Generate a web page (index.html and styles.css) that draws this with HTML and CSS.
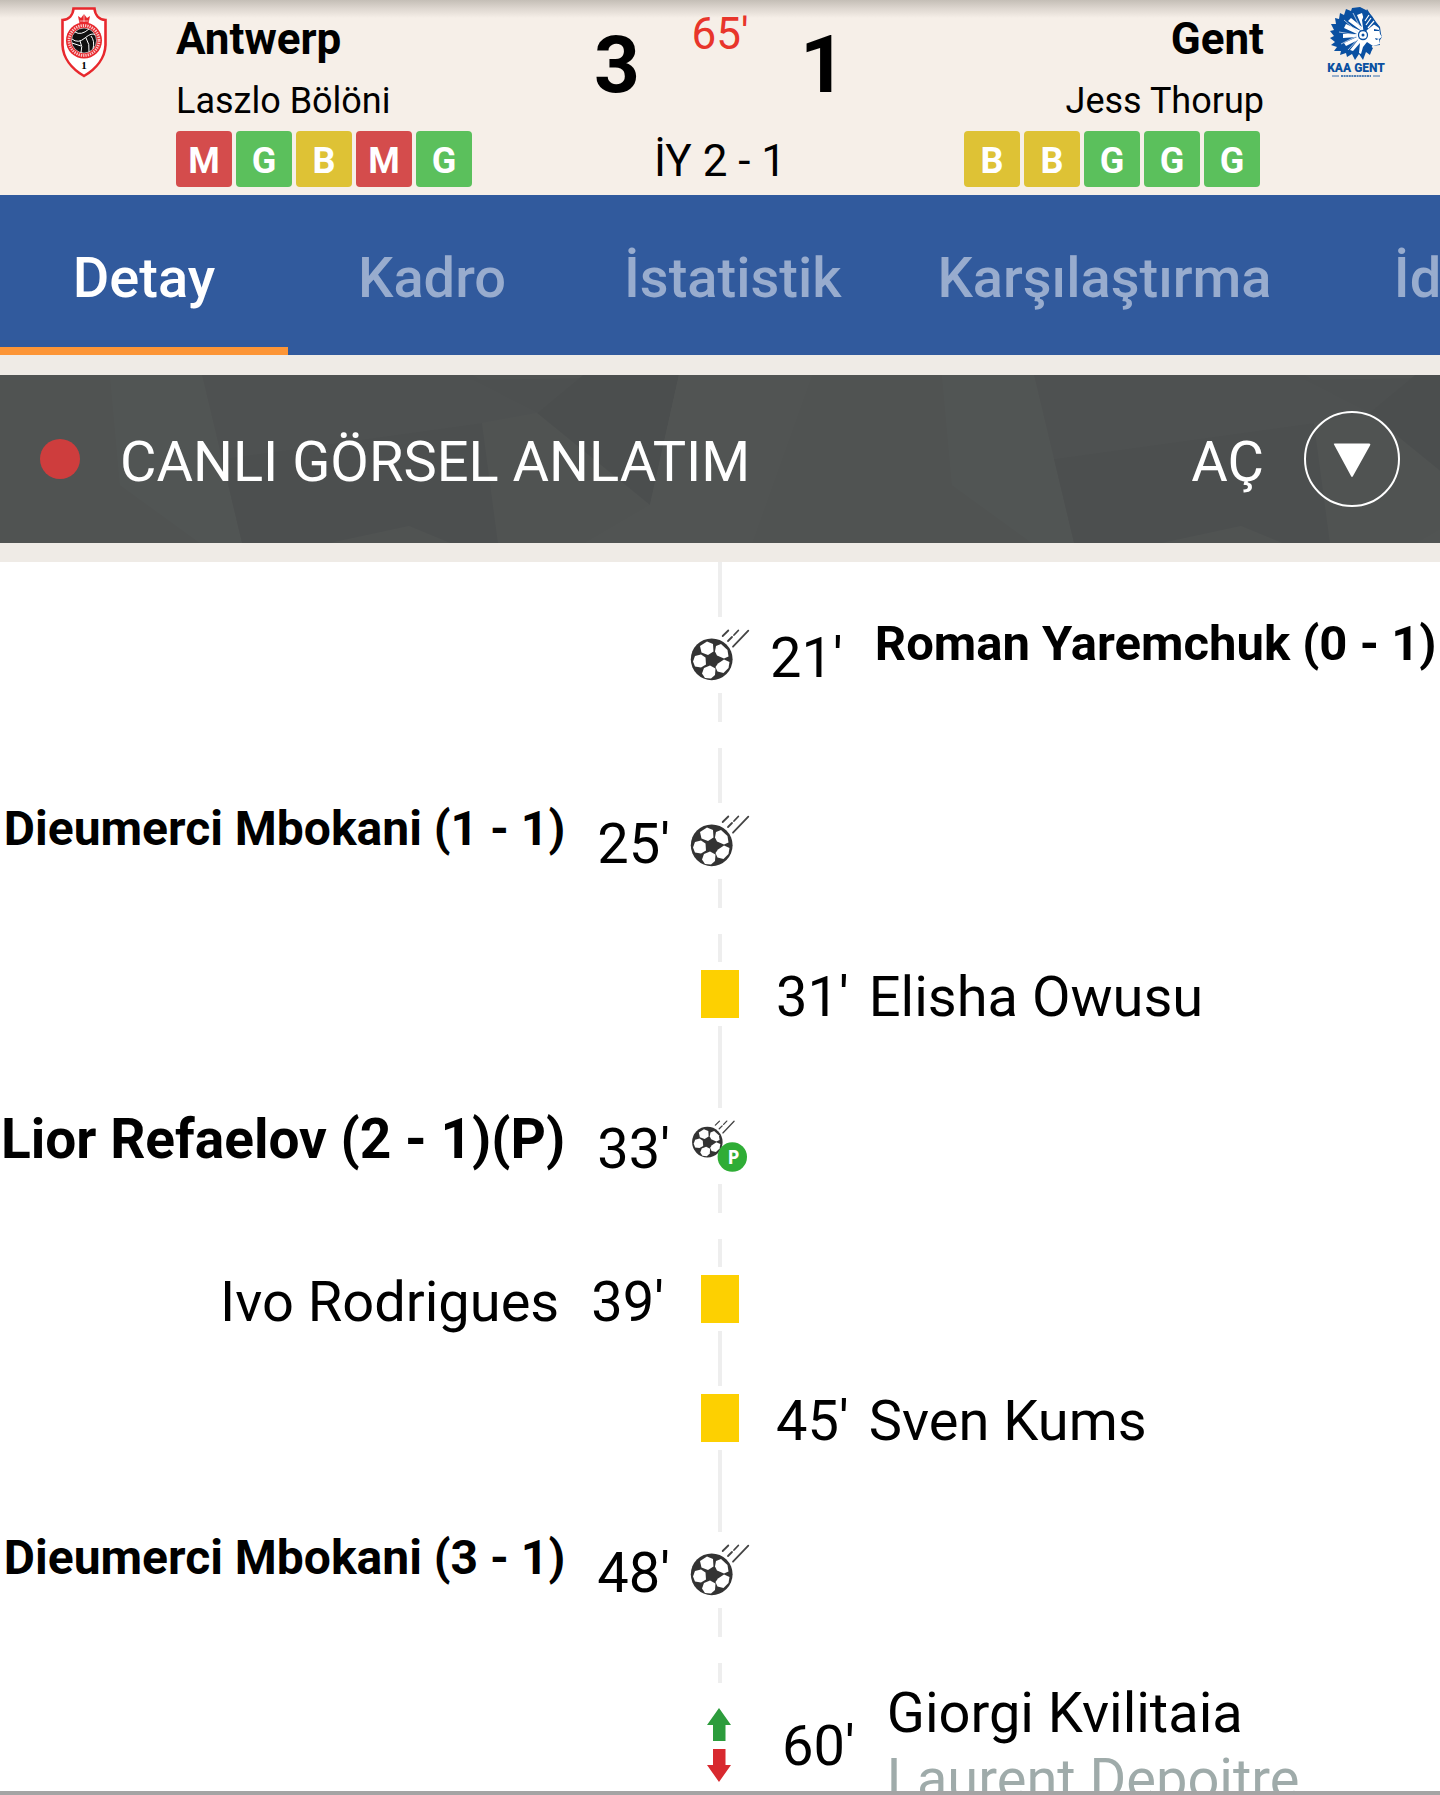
FILE: index.html
```html
<!doctype html>

<html lang="tr">
<head>
    <meta charset="utf-8">
    <meta name="viewport" content="width=device-width, initial-scale=1">

    <title>Antwerp 3 - 1 Gent</title>
    <link rel="stylesheet" href="styles.css">
</head>

<body>
    <!-- shared shapes -->
    <svg class="defs" aria-hidden="true">
        <defs>
            <g id="ball">
                <circle cx="21.7" cy="30.3" r="20.9" fill="#333"/>
                <g fill="#fff">
                    <path d="M10 17l7-4.500 6 2.500.5 7.500-5.500 3.500-6.500-2.500z"/>
                    <path d="M26 17l5-2 6.500 6 1 6.500-4.500 2-7-3-2-4z"/>
                    <path d="M28 34.500l6-4 5.500 2.500-1 6-5 5-6-1.500-2-4.500z"/>
                    <path d="M14 39l6-2.500 5.500 3-.5 6.500-4 3.500-6-.5-3-4.500z"/>
                    <path d="M5 27l6-1.500 4.500 3 .5 7-5 3-6-1-2-5z"/>
                </g>
                <path d="M32.700 7l5.600-5.500M38 12l4-4M44 6l4.300-4.500M43 17.700L58.300 1.700" stroke="#444" stroke-width="1.800" fill="none" stroke-linecap="round"/>
            </g>
            <pattern id="facets" width="832" height="168" patternUnits="userSpaceOnUse">
                <rect width="832" height="168" fill="#505352"/>
                <path d="M110 0H202L242 168H200L120 110Z" fill="#515554"/>
                <path d="M202 0H473L537 38L482 48L400 68L498 168H242Z" fill="#4e5151"/>
                <path d="M222 84L482 48L498 168H242Z" fill="#4c4f4f"/>
                <path d="M473 5L583 3L537 38Z" fill="#4d5050"/>
                <path d="M583 0H679L650 130L537 38Z" fill="#4b4e4e"/>
                <path d="M679 0H812L752 168H585L650 130Z" fill="#515453"/>
                <path d="M330 168L409 151L450 168Z" fill="#505352"/>
            </pattern>
        </defs>
    </svg>

    <header class="match">
        <svg class="logo" width="48" height="72" viewBox="0 0 48 72" role="img" aria-label="Antwerp">
            <path d="M13.500 2.500H34.500C35 9 39 13.500 45.500 14V39C45 52 36 63 24 70C12 63 3 52 2.500 39V14C9 13.500 13 9 13.500 2.500Z" fill="#fff" stroke="#e8282d" stroke-width="2.600"/>
            <path d="M18 10l3 2 3-4 3 4 3-2-1.500 7.500h-9z" fill="#e8282d"/>
            <path d="M19.500 15h9M24 8v8" stroke="#fff" stroke-width=".6"/>
            <circle cx="24" cy="34.500" r="18" fill="#e8282d"/>
            <circle cx="24" cy="34.500" r="15" fill="none" stroke="#fff" stroke-width="2.800" stroke-dasharray="1.300 1" opacity=".75"/>
            <circle cx="24" cy="34.500" r="12.500" fill="#111" stroke="#fff" stroke-width=".6"/>
            <path d="M12 33q6 5 13-1t10-3M15 26q6 4 14-3M20 35q3 5 1 12M26 32q4 6 3 14M31 30q4 5 2 13M12 37l9 3" stroke="#fff" stroke-width="1" fill="none"/>
            <text x="24" y="63" class="crest-no">1</text>
        </svg>

        <div class="team">
            <h2>Antwerp</h2>
            <p>Laszlo Bölöni</p>
            <div class="form">
                <span class="loss">M</span><span class="win">G</span><span class="draw">B</span><span class="loss">M</span><span class="win">G</span>
            </div>
        </div>

        <div class="score">
            <b>3</b>
            <div class="clock">
                <span class="minute-now">65'</span>
                <span>İY 2 - 1</span>
            </div>
            <b>1</b>
        </div>

        <div class="team away">
            <h2>Gent</h2>
            <p>Jess Thorup</p>
            <div class="form">
                <span class="draw">B</span><span class="draw">B</span><span class="win">G</span><span class="win">G</span><span class="win">G</span>
            </div>
        </div>

        <svg class="logo" width="60" height="72" viewBox="0 0 60 72" role="img" aria-label="KAA Gent">
            <path d="M26 2L34 1L40 4L46 10L50 16L54 21L55 28L56 31L54 34L54 39L46 40L44 49L40 46L37 54L33 48L29 54L26 48L21 51L20 47L14 49L15 45L8 45L11 41L5 39L9 36L4 32L8 30L4 25L8 24L5 18L10 18L9 12L13 13L14 7L18 9L20 3L25 5Z" fill="#0a50a1"/>
            <path d="M37 26L22 15L25 12L36 21L31 9L36 7L40 20L46 17L53 22L54 28L56 31L53 33L54 38L47 40L41 36L37 41L35 48L33 47L34 37L27 45L24 44L32 34L20 40L18 37L31 31L17 32L17 28L31 28L18 22L20 18Z" fill="#fff"/>
            <path d="M36 14L41 3L50 17L41 24L38 29ZM48 23l5 1v1l-5 0zM49 32l4 1-3 1zM42 39l5 3-3 6z" fill="#0a50a1"/>
            <path d="M39 15l4-6M40 19l5-7M42 22l6-7" stroke="#fff" stroke-width="1.200"/>
            <path d="M13 26l18 3M15 38l16-8M18 14l15 13M22 44l11-12M27 7l9 18" stroke="#d4e0ef" stroke-width=".8"/>
            <circle cx="37" cy="29" r="4.500" fill="#fff" stroke="#0a50a1" stroke-width="1.300"/>
            <circle cx="37" cy="29" r="1.500" fill="#0a50a1"/>
            <text x="30" y="66" class="club">KAA GENT</text>
            <path d="M6 70h7M47 70h7" stroke="#0a50a1" stroke-width=".8"/>
            <path d="M15 70h30" stroke="#0a50a1" stroke-width="2" stroke-dasharray="2 .6" opacity=".7"/>
        </svg>
    </header>

    <nav class="tabs">
        <a href="#detay" class="active">Detay</a>
        <a href="#kadro">Kadro</a>
        <a href="#istatistik">İstatistik</a>
        <a href="#karsilastirma">Karşılaştırma</a>
        <a href="#iddaa">İddaa</a>
    </nav>

    <section class="live">
        <svg class="live-bg" aria-hidden="true"><rect width="100%" height="100%" fill="url(#facets)"/></svg>
        <span class="dot"></span>
        <span class="live-title">CANLI GÖRSEL ANLATIM</span>
        <button type="button">
            <span>AÇ</span>
            <svg width="96" height="96" viewBox="0 0 96 96" aria-hidden="true">
                <circle cx="48" cy="48" r="47" fill="none" stroke="#fff" stroke-width="2"/>
                <path d="M30 33.500Q29 32.500 31 32.500H65Q67 32.500 66 34.500L49 65Q48 67 47 65Z" fill="#fff"/>
            </svg>
        </button>
    </section>

    <main class="timeline" id="detay">
        <div class="event goal">
            <div class="track"><i><svg width="60" height="52"><use href="#ball"/></svg></i></div>
            <div class="side right"><time>21'</time><span class="player long">Roman Yaremchuk (0 - 1)</span></div>
        </div>
        <div class="event goal">
            <div class="side left"><span class="player long">Dieumerci Mbokani (1 - 1)</span><time>25'</time></div>
            <div class="track"><i><svg width="60" height="52"><use href="#ball"/></svg></i></div>
        </div>
        <div class="event card">
            <div class="track"><i><span class="yellow"></span></i></div>
            <div class="side right"><time>31'</time><span class="player">Elisha Owusu</span></div>
        </div>
        <div class="event goal">
            <div class="side left"><span class="player">Lior Refaelov (2 - 1)(P)</span><time>33'</time></div>
            <div class="track"><i>
                <svg width="60" height="52">
                    <use href="#ball" transform="translate(1.5 0) scale(.73)"/>
                    <circle cx="42.300" cy="37" r="14.700" fill="#2fad36"/>
                    <text x="43.500" y="44" class="pen">P</text>
                </svg>
            </i></div>
        </div>
        <div class="event card">
            <div class="side left"><span class="player">Ivo Rodrigues</span><time>39'</time></div>
            <div class="track"><i><span class="yellow"></span></i></div>
        </div>
        <div class="event card">
            <div class="track"><i><span class="yellow"></span></i></div>
            <div class="side right"><time>45'</time><span class="player">Sven Kums</span></div>
        </div>
        <div class="event goal">
            <div class="side left"><span class="player long">Dieumerci Mbokani (3 - 1)</span><time>48'</time></div>
            <div class="track"><i><svg width="60" height="52"><use href="#ball"/></svg></i></div>
        </div>
        <div class="event sub">
            <div class="track"><i>
                <svg width="26" height="76" viewBox="0 0 26 76">
                    <path d="M12 1L24 18H18.500V34H6V18H0Z" fill="#2c9c3c"/>
                    <path d="M12 75L24 58H18.500V42H6V58H0Z" fill="#d8292f"/>
                </svg>
            </i></div>
            <div class="side right"><time>60'</time><span class="player">Giorgi Kvilitaia<br><span class="out">Laurent Depoitre</span></span></div>
        </div>
    </main>
</body>
</html>
```

FILE: styles.css
```css
* { box-sizing: border-box; }
body {
    display: flex;
    flex-direction: column;
    height: 100vh;
    margin: 0;
    overflow: hidden;
    background: #efebe6;
    color: #000;
    font-family: Roboto, Arial, sans-serif;
    font-size: 56px;
    line-height: 66px;
}
h2, p { margin: 0; }
a { text-decoration: none; }
svg { display: block; }
.defs { position: absolute; width: 0; height: 0; }

/* score header */
.match {
    display: grid;
    grid-template-columns: 176px 1fr auto 1fr 176px;
    flex: none;
    height: 195px;
    background: linear-gradient(#c4beb6, #dcd5ce 8px, #f6efe8 18px);
}
.logo { margin: 6px auto 0 60px; }
.away + .logo { margin: 6px 54px 0 auto; }
.crest-no { font: bold 11px "Liberation Serif", serif; text-anchor: middle; }
.club { font: 900 12px Roboto, sans-serif; fill: #0a50a1; text-anchor: middle; }
.team { padding-top: 14px; }
.team h2 { font-size: 44px; line-height: 50px; }
.team p { margin: 16px 0 9px; font-size: 36px; line-height: 42px; }
.form { display: flex; gap: 4px; }
.form span {
    width: 56px; height: 56px;
    border-radius: 4px;
    color: #fff;
    font-size: 36px;
    font-weight: bold;
    line-height: 60px;
    text-align: center;
}
.form .win { background: #5bc05c; }
.form .draw { background: #dec235; }
.form .loss { background: #d44c4c; }
.away { text-align: right; }
.away .form { justify-content: flex-end; margin-right: 4px; }
.score { display: flex; }
.score b { margin-top: 18px; font-size: 80px; line-height: 94px; }
.clock {
    display: flex;
    flex-direction: column;
    justify-content: space-between;
    width: 160px;
    padding: 8px 0;
    font-size: 44px;
    line-height: 52px;
    text-align: center;
    white-space: nowrap;
}
.minute-now { color: #e8352b; }

/* tabs */
.tabs {
    display: flex;
    flex: none;
    height: 160px;
    overflow: hidden;
    background: #315a9d;
}
.tabs a {
    flex: none;
    min-width: 288px;
    padding: 50px 48px 0;
    border-bottom: 8px solid transparent;
    color: #98acce;
    font-weight: 500;
    text-align: center;
}
.tabs .active { border-color: #fc9537; color: #fff; }

/* live animation bar */
.live {
    position: relative;
    display: flex;
    align-items: center;
    flex: none;
    height: 168px;
    margin: 20px 0 19px;
    padding: 0 40px;
    color: #fff;
}
.live-bg { position: absolute; top: 0; left: 0; width: 100%; height: 100%; z-index: -1; }
.dot { width: 40px; height: 40px; border-radius: 50%; background: #ce3d3d; }
.live-title { margin-left: 40px; padding-top: 6px; }
.live button {
    display: flex;
    align-items: center;
    gap: 40px;
    margin-left: auto;
    padding: 0;
    border: 0;
    background: none;
    color: inherit;
    font: inherit;
    cursor: pointer;
}
.live button span { padding-top: 6px; }

/* events */
.timeline {
    flex: 1;
    min-height: 0;
    overflow: hidden;
    background: #fff;
    border-bottom: 4px solid #a4a4a4;
}
.event {
    display: grid;
    grid-template-columns: minmax(0, 1fr) 80px minmax(0, 1fr);
}
.track {
    display: flex;
    flex-direction: column;
    align-items: center;
    grid-column: 2;
    grid-row: 1;
}
.track::before, .track::after { content: ''; width: 4px; background: #eee; }
.track i { display: flex; align-items: center; }
.side { display: flex; align-items: flex-start; white-space: nowrap; grid-row: 1; }
.left { justify-content: flex-end; grid-column: 1; }
.right { grid-column: 3; }

.goal { height: 186px; font-weight: bold; }
.goal .track::before { height: 55px; }
.goal .track i { height: 76px; }
.goal .track::after { height: 29px; }
.goal .side { padding: 53px 10px 0; }
.goal time { margin-top: 10px; font-weight: normal; }
.goal .left time { margin-left: 32px; }
.goal .right time { margin-right: 32px; }
.goal .player { font-size: 55px; }
.goal .player.long { font-size: 48px; line-height: 56px; }
.goal .right .player.long { font-size: 49px; line-height: 58px; }

.card { height: 119px; }
.card .track::before, .card .track::after { height: 28px; }
.card .track i { height: 64px; }
.card .side { padding: 30px 16px 0; }
.card .left time { margin-left: 32px; }
.card .right time { margin-right: 20px; }
.yellow { width: 38px; height: 48px; background: #fdd001; }

.sub .track::before { height: 20px; }
.sub .track i { height: 124px; }
.sub .side { align-items: center; padding: 17px 22px 0; }
.sub time { margin-right: 32px; }
.out { color: #9fabaa; }
.pen { font: bold 19px "Open Sans", sans-serif; fill: #fff; text-anchor: middle; }
```
